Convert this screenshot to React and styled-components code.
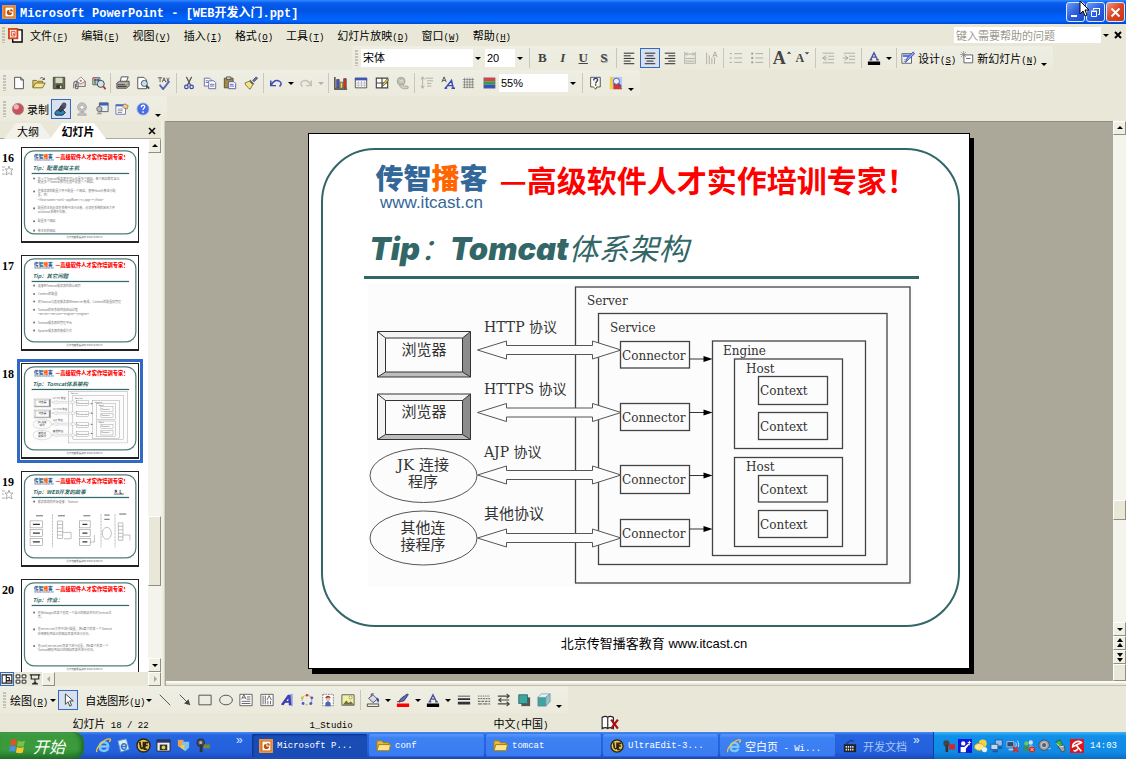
import React from "react";
import styled, { createGlobalStyle, css } from "styled-components";

const mono = '"Liberation Mono", "Noto Sans CJK SC", monospace';
const cjk = '"Noto Sans CJK SC", "Liberation Sans", sans-serif';
const teal = "#336666";
const face = "#e9e8d8";

const Global = createGlobalStyle`
  * { box-sizing: border-box; }
  html, body { margin: 0; background: ${face}; }
  body { font: 11px ${cjk}; color: #000; overflow: hidden; }
  button, input, select { font: inherit; color: inherit; margin: 0; border-radius: 0; }
  button { border: 0; background: none; padding: 0; }
  svg { display: block; flex: none; }
`;

/* ---------- icons ---------- */

const lines = (ys, x1 = 2, x2 = 14, stroke = "#333") =>
  ys.map((y) => <path key={y} d={`M${x1} ${y}H${x2}`} stroke={stroke} strokeWidth="1.2" />);

const icons = {
  ppt: (
    <g>
      <rect width="16" height="16" fill="#d9731a" />
      <rect x="1" y="1" width="14" height="14" fill="none" stroke="#f6b26b" />
      <rect x="4" y="3" width="9" height="10" fill="#fff" />
      <path d="M8.5 5.5a3 3 0 1 0 3 3h-3z" fill="#c2500c" />
      <path d="M9.5 4.5v3h3a3 3 0 0 0-3-3z" fill="#c2500c" />
    </g>
  ),
  doc: (
    <g>
      <path d="M5 2h10v13H5z" fill="#fff" stroke="#000" strokeWidth="1.5" />
      <path d="M0 0h11v12H0z" fill="#d4451d" />
      <path d="M2 2h7v8H2z" fill="#fff" />
      <path d="M3.5 3.5h4v5h-4z" fill="none" stroke="#d4451d" />
      <path d="M5.5 5v2h2" stroke="#d4451d" fill="none" />
    </g>
  ),
  new: <path d="M3 1.5h7l3 3v10H3zM10 1.5v3h3" fill="#fff" stroke="#444" />,
  open: (
    <g>
      <path d="M1 13V5h4l1 1h6v3" fill="#e9cf6b" stroke="#6f6420" />
      <path d="M1 13.5L4 8h11l-3 5.5z" fill="#f7e58f" stroke="#6f6420" />
      <path d="M9 3c2-2 4-1 5 1m0-2v2h-2" fill="none" stroke="#444" />
    </g>
  ),
  save: (
    <g>
      <path d="M1.5 1.5h13v13h-13z" fill="#6b7050" stroke="#3c4030" />
      <path d="M4 2h8v6H4z" fill="#d8d8c8" />
      <path d="M5 10h7v4H5z" fill="#33362a" />
      <path d="M9 11h2v3H9z" fill="#ddd" />
    </g>
  ),
  mail: (
    <g>
      <path d="M5 6l5-5 5 5v6H5z" fill="#fff" stroke="#777" />
      <path d="M5 6l5 3 5-3v6H5z" fill="#f3dcd0" stroke="#777" />
      <path d="M2 14V9c0-4 5-4 5 0v4c0 2-3 2-3 0V9" fill="none" stroke="#667" strokeWidth="1.2" />
      <circle cx="10" cy="5.500" r="1.300" fill="#c66" />
    </g>
  ),
  find: (
    <g>
      <path d="M1 2h8v8H1z" fill="#fff" stroke="#444" />
      <path d="M2 3h3v3H2z" fill="#c33" />
      <path d="M5 3h3v3H5z" fill="#46a" />
      <path d="M2 6h3v3H2z" fill="#3a7" />
      <circle cx="10" cy="9" r="4" fill="#cfe4ef" stroke="#333" />
      <path d="M13 12l2.5 3" stroke="#a33" strokeWidth="2" />
    </g>
  ),
  print: (
    <g>
      <path d="M5 6l1-5h8l-2 5" fill="#fff" stroke="#444" />
      <path d="M1 8l3-2h11v5l-3 3H1z" fill="#aaa" stroke="#444" />
      <path d="M2 10h10M2 12h10" stroke="#333" />
      <path d="M10 9h2" stroke="#e3c233" strokeWidth="2" />
    </g>
  ),
  preview: (
    <g>
      <path d="M2 1.5h7l3 3v10H2z" fill="#fff" stroke="#444" />
      <circle cx="9.5" cy="8.5" r="3.5" fill="#bfe3e6" stroke="#446" />
      <path d="M12 11l3 3.500" stroke="#445" strokeWidth="2" />
    </g>
  ),
  spell: (
    <g>
      <path d="M1 2h5M3.500 2v5M6 7l2-5 2 5M7 5h2M11 2l3 5M14 2l-3 5" fill="none" stroke="#555" />
      <path d="M3 10l4 5 7-9" fill="none" stroke="#5566b8" strokeWidth="2.200" />
    </g>
  ),
  cut: (
    <g fill="none">
      <path d="M5 1l5 10M11 1L6 11" stroke="#555" strokeWidth="1.300" />
      <circle cx="5" cy="12.500" r="2" stroke="#3a49b0" strokeWidth="1.400" />
      <circle cx="11" cy="12.500" r="2" stroke="#3a49b0" strokeWidth="1.400" />
    </g>
  ),
  copy: (
    <g fill="#fff" stroke="#5a62a0">
      <path d="M1.500 2.500h6l2 2v7h-8z" />
      <path d="M6.500 5.500h6l2 2v7h-8z" />
      <path d="M8 9.500h5M8 11.500h5M3 5.500h3M3 7.500h3" />
    </g>
  ),
  paste: (
    <g>
      <path d="M1.500 2.500h10v11h-10z" fill="#a08a4a" stroke="#5b4d20" />
      <path d="M4 1h5v3H4z" fill="#ccc" stroke="#555" />
      <path d="M6.500 6.500h6l2 2v6h-8z" fill="#fff" stroke="#4a52a0" />
      <path d="M8 9.500h4M8 11.500h5" stroke="#4a52a0" />
    </g>
  ),
  brush: (
    <g>
      <path d="M10 5l4-4 1.500 1.500-4 4z" fill="#6b78c8" stroke="#445" />
      <path d="M7 4l5 5-2 1-4-4z" fill="#666" />
      <path d="M1 8l5-2 4 4-3 5c-2-1-5-4-6-7z" fill="#f2e58a" stroke="#77703a" />
    </g>
  ),
  undo: <path d="M2 5v6h6M2.500 10.500C5 5 9 4 12 6s2 4 0 6" fill="none" stroke="#3b4bb5" strokeWidth="1.700" />,
  redo: <path d="M14 5v6H8M13.500 10.500C11 5 7 4 4 6s-2 4 0 6" fill="none" stroke="#c2c1b2" strokeWidth="1.700" />,
  chart: (
    <g stroke="#333" strokeWidth=".7">
      <path d="M1 1v14h14" fill="none" strokeWidth="1.500" />
      <path d="M3 4h3v10H3z" fill="#4458d0" />
      <path d="M7 7h3v7H7z" fill="#f2d43a" />
      <path d="M11 3h3v11h-3z" fill="#d3382c" />
    </g>
  ),
  table: (
    <g>
      <path d="M1.500 2.500h13v11h-13z" fill="#fff" stroke="#444" />
      <path d="M1 2h14v3H1z" fill="#4156b5" />
      <path d="M5 5v8M8.500 5v8M12 5v8M2 8h12M2 10.500h12" stroke="#bbb" />
    </g>
  ),
  borders: (
    <g>
      <path d="M1.500 2.500h13v11h-13zM8 2.500v11M1.500 8h13" fill="#fff" stroke="#444" strokeWidth="1.300" />
      <path d="M8 12l1-3 5-6 1.500 1.500-5 6z" fill="#f0d040" stroke="#444" strokeWidth=".8" />
    </g>
  ),
  link: (
    <g fill="#d0cfc2" stroke="#a5a498">
      <circle cx="7" cy="6" r="4.500" fill="#bdbcaf" />
      <path d="M4 4c2 2 4 1 6 3M5 8c2-1 3-1 4-4" fill="none" stroke="#e5e4d8" />
      <path d="M5 11c3-2 4-1 5 0s3 0 5 1v2c-3 1-8 1-10-3z" />
    </g>
  ),
  expand: (
    <g stroke="#aaa99c" fill="none">
      <path d="M3 1v13M1 4l2-3 2 3M1 11l2 3 2-3M6 2.500h9M8 5.500h7M8 8.500h5M8 11.500h5" />
    </g>
  ),
  fontAA: (
    <g fill="none">
      <path d="M1 7l2.500-6L6 7M2 5h3" stroke="#444" />
      <path d="M5 14l7-9 2 9M8 11h5.500M4 14h3M12 14h4" stroke="#3b4bb5" strokeWidth="1.700" />
    </g>
  ),
  grid: <path d="M4 2v12M7 2v12M10 2v12M13 2v12M2 4h13M2 7h13M2 10h13M2 13h13" stroke="#777" strokeWidth=".8" />,
  color: (
    <g>
      <path d="M2 2h13v4H2z" fill="#d8404a" />
      <path d="M2 6h13v4H2z" fill="#3a9a4a" />
      <path d="M2 10h13v4H2z" fill="#3a4cc4" />
      <path d="M2 2h13v12H2z" fill="none" stroke="#777" strokeWidth=".6" />
    </g>
  ),
  help: (
    <g>
      <path d="M3 1.500h11v11H10l-1 2.500-3-2.500H3z" fill="#fffde0" stroke="#444" />
      <path d="M6.500 5c0-3 4.500-3 4.500-.5C11 6.500 8.700 6 8.700 8.500M8.700 9.500v1.500" fill="none" stroke="#26389c" strokeWidth="1.600" />
    </g>
  ),
  research: (
    <g>
      <path d="M1 1h14v14H1z" fill="#b9c8ee" />
      <path d="M1 1h3v14H1z" fill="#f2d43a" />
      <path d="M5 8l5-3 5 10H5z" fill="#d3382c" />
      <circle cx="8.500" cy="6" r="3.500" fill="#e8f0ff" stroke="#4057b0" />
      <path d="M11 9l3 3" stroke="#4057b0" strokeWidth="2" />
    </g>
  ),
  alignL: <g>{lines([2.5, 8.5, 14.5])}{lines([5.5, 11.5], 2, 10)}</g>,
  alignC: <g>{lines([2.5, 8.5, 14.5])}{lines([5.5, 11.5], 4, 12)}</g>,
  alignR: <g>{lines([2.5, 8.5, 14.5])}{lines([5.5, 11.5], 6, 14)}</g>,
  distrib: (
    <g stroke="#a9a89b" fill="none">
      <path d="M2 1v14M14 1v14M3 3.500h10M5 2L3 3.500 5 5M11 2l2 1.500L11 5M3 8.500h10M3 11.500h10M3 14h10" />
    </g>
  ),
  vtext: <path d="M3 2v13M6 5v10M9 8v7M12 7v8M10 7l2.500-6L15 7M11 5h3" stroke="#a9a89b" fill="none" />,
  numlist: <g>{lines([3, 8, 13], 6, 15, "#b5b4a7")}{lines([3, 8, 13], 1, 3, "#a0a094")}</g>,
  bullist: (
    <g fill="#a0a094">
      {lines([3, 8, 13], 6, 15, "#b5b4a7")}
      <circle cx="2.500" cy="3" r="1.300" />
      <circle cx="2.500" cy="8" r="1.300" />
      <circle cx="2.500" cy="13" r="1.300" />
    </g>
  ),
  outdent: (
    <g>
      {lines([2.5, 13.5], 2, 15, "#b5b4a7")}
      {lines([6, 9.5], 8, 15, "#b5b4a7")}
      <path d="M6 5L2 8l4 3M2 8h5" fill="none" stroke="#a0a094" />
    </g>
  ),
  indent: (
    <g>
      {lines([2.5, 13.5], 2, 15, "#b5b4a7")}
      {lines([6, 9.5], 8, 15, "#b5b4a7")}
      <path d="M3 5l4 3-4 3M1 8h6" fill="none" stroke="#a0a094" />
    </g>
  ),
  design: (
    <g>
      <path d="M1 3h11v11H1z" fill="#fff" stroke="#555" />
      <path d="M2 4h9v3H2z" fill="#5b7be0" />
      <path d="M5 13l2-5 7-7 1.500 2-7 7z" fill="#8ea4f0" stroke="#3a49b0" />
      <path d="M3 10h3M3 12h2" stroke="#888" />
    </g>
  ),
  newslide: (
    <g>
      <path d="M4.500 4.500h10v9h-10z" fill="#fff" stroke="#555" />
      <path d="M7 8.500h5" stroke="#555" />
      <path d="M4 0v8M0 4h8M1 1l6 6M7 1L1 7" stroke="#888" strokeWidth=".8" />
    </g>
  ),
  ball: (
    <g>
      <circle cx="8" cy="8" r="6.500" fill="#c6525a" stroke="#a89090" />
      <circle cx="6" cy="5.500" r="3" fill="#f0b5b8" />
    </g>
  ),
  mic: (
    <g>
      <path d="M1 13c1-4 5-5 9-4l3 3-3 3H2z" fill="#2f86b5" stroke="#123" />
      <path d="M7 11L5 9l4-6 4 3-4 4z" fill="#445" stroke="#123" />
      <circle cx="11.500" cy="3.500" r="2.800" fill="#556" />
    </g>
  ),
  webcam: (
    <g fill="#c5c5c5" stroke="#a5a5a5">
      <circle cx="8" cy="6" r="5" />
      <circle cx="8" cy="6" r="2.500" fill="#f4f4f4" />
      <path d="M3 15c1-4 9-4 10 0z" />
    </g>
  ),
  screencam: (
    <g>
      <path d="M5 1h10v10H5z" fill="#e6ecf8" stroke="#555" />
      <path d="M5 1h10v3H5z" fill="#3a62b5" />
      <circle cx="5" cy="8" r="3" fill="#bbb" stroke="#666" />
      <path d="M2 14c1-3 5-3 6 0z" fill="#999" />
    </g>
  ),
  props: (
    <g>
      <path d="M1 3h11v11H1z" fill="#fff" stroke="#5a76b8" />
      <path d="M1 3h11v2H1z" fill="#4a6cc0" />
      <path d="M3 8h6M3 10h6M3 12h5" stroke="#888" />
      <path d="M8 5l3-3 4 2-1 4-4-1z" fill="#e8c79a" stroke="#86603a" strokeWidth=".7" />
    </g>
  ),
  qball: (
    <g>
      <circle cx="8" cy="8" r="6.800" fill="#4a6fe0" stroke="#8ea3e8" />
      <path d="M6 6c0-3 4-3 4-.5C10 7.200 8 7 8 9M8 10.500v2" stroke="#fff" strokeWidth="1.500" fill="none" />
    </g>
  ),
  normal: <path d="M1.500 2.500h13v11h-13zM7 2.500v11M7 6h4v4H7M7 10.500h7.500" fill="#fff" stroke="#222" strokeWidth="1.500" />,
  sorter: <path d="M1.500 2.500h5v4h-5zM9.500 2.500h5v4h-5zM1.500 9.500h5v4h-5zM9.500 9.500h5v4h-5z" fill="#fff" stroke="#222" strokeWidth="1.300" />,
  show: <path d="M1 2.500h14M3 3v5h10V3M8 8v5M4 14.500h8M6 13h4" fill="none" stroke="#222" strokeWidth="1.500" />,
  pointer: <path d="M5 1v12l3-3 2 5 2-1-2-5h4z" fill="#fff" stroke="#333" />,
  line: <path d="M2 2l12 12" stroke="#444" />,
  arrow: (
    <g>
      <path d="M2 2l9 9" stroke="#444" />
      <path d="M14 14l-2-7-5 5z" fill="#444" />
    </g>
  ),
  rect: <path d="M1 2.500h14v11H1z" fill="none" stroke="#444" />,
  oval: <ellipse cx="8" cy="8" rx="7.300" ry="5.500" fill="none" stroke="#444" />,
  textbox: (
    <g fill="none" stroke="#555">
      <path d="M1 1.500h14v13H1z" fill="#fff" />
      <path d="M3 7l2.500-5L8 7M4 5.500h3M9 4.500h4M9 7h4M3 9.500h10M3 12h10" />
    </g>
  ),
  vtextbox: (
    <g fill="none" stroke="#555">
      <path d="M1 1.500h14v13H1z" fill="#fff" />
      <path d="M8 8l2.500-5L13 8M3.500 3v10M6 3v10M9 9v4M12 9v4" />
    </g>
  ),
  wordart: (
    <g>
      <path d="M12 1l2.500 0 0 14H12z" fill="#9aa2dc" />
      <path d="M1 13l8-11h3l1 12h-3v-3H6l-2 3z" fill="#3a3fb4" />
      <path d="M7.500 9l2-3v3z" fill="#fff" />
    </g>
  ),
  diagram: (
    <g fill="none">
      <circle cx="8" cy="8" r="5.500" stroke="#888" strokeDasharray="2 2" />
      <circle cx="8" cy="2.500" r="1.500" fill="#d3382c" />
      <circle cx="13.500" cy="5.500" r="1.600" fill="#4a57c4" />
      <circle cx="12.500" cy="12" r="1.600" fill="#4a57c4" />
      <circle cx="3.500" cy="12" r="1.600" fill="#4a57c4" />
      <circle cx="2.500" cy="5.500" r="1.600" fill="#e0bb2e" />
    </g>
  ),
  clipart: (
    <g>
      <path d="M2 1.500h12v13H2z" fill="#fff" stroke="#777" strokeDasharray="2 1" />
      <path d="M5 15v-4l3-2 3 2v4z" fill="#4b64b8" />
      <circle cx="8" cy="6.500" r="2.800" fill="#e8c0a5" />
      <path d="M5 6c0-4 6-4 6 0l-2-1z" fill="#a5322c" />
    </g>
  ),
  picture: (
    <g>
      <path d="M1 2h14v12H1z" fill="#f3efa2" stroke="#555" />
      <path d="M2 13.500l4-5 3 3 2-2 4 4z" fill="#6c7044" />
      <circle cx="11" cy="5" r="1.700" fill="#fff" stroke="#99954a" />
    </g>
  ),
  fill: (
    <g>
      <path d="M3 6l5-4 5 5-5 4z" fill="#d6d9f0" stroke="#445" />
      <path d="M12 5c4 1 3 4 2 6-1-1-2-3-2-6z" fill="#3a49b0" />
      <path d="M6 4V1h3" stroke="#445" fill="none" />
      <path d="M1.500 12.500h13v3h-13z" fill={face} stroke="#444" />
    </g>
  ),
  pen: (
    <g>
      <path d="M3 10l3-4 7-5 1 1-5 7z" fill="#5c69c8" stroke="#334" />
      <path d="M1 10c2-1 2 1 4 0" stroke="#444" fill="none" />
      <path d="M1 12h14v4H1z" fill="red" />
    </g>
  ),
  fontColor: (
    <g>
      <path d="M4 10l4-8 4 8M5.500 7h5M3 10h3M10.500 10h3" fill="none" stroke="#4a539c" strokeWidth="1.600" />
      <path d="M1 12h14v4H1z" />
    </g>
  ),
  weight: (
    <g fill="#333">
      <path d="M1 3h14v1H1zM1 6h14v2H1zM1 10h14v3H1z" />
    </g>
  ),
  dash: (
    <g stroke="#444">
      <path d="M1 3.500h14" strokeDasharray="1 1" />
      <path d="M1 6.500h14" strokeDasharray="2 1" />
      <path d="M1 9.500h14" strokeDasharray="3 1" />
      <path d="M1 12.500h14" strokeDasharray="5 1" />
    </g>
  ),
  arrows: <path d="M1 3.500h13M11 1l3 2.500L11 6M14 8H2M5 5.500L2 8l3 2.500M1 12.500h13M11 10l3 2.500-3 2.500" fill="none" stroke="#444" strokeWidth="1.300" />,
  shadow: (
    <g>
      <path d="M5 5h10v10H5z" fill="#555" />
      <path d="M2 2h10v10H2z" fill="#3fa39e" stroke="#2a6e6b" />
    </g>
  ),
  cube: (
    <g stroke="#579" strokeWidth=".6">
      <path d="M1 5h9v10H1z" fill="#3fa39e" />
      <path d="M1 5l4-4h10l-5 4z" fill="#e4f4f4" />
      <path d="M10 5l5-4v9l-5 5z" fill="#8cc9c6" />
    </g>
  ),
  spellbook: (
    <g>
      <path d="M1 3c2-1 4-1 5 0 1-1 3-1 5 0v10c-2-1-4-1-5 0-1-1-3-1-5 0zM6 3v10" fill="#fff" stroke="#222" />
      <path d="M9 5l6 8M15 5l-6 8" stroke="#a5121a" strokeWidth="2" />
    </g>
  ),
  windows: (
    <g>
      <path d="M2 3c2-1.500 4-1 5.500 0L6.500 8C5 7 3 7 1 8z" fill="#e8502a" />
      <path d="M8.500 3.500c2 1 4 1 6.500 0l-1 5c-2 1-4 1-6.500 0z" fill="#7cc142" />
      <path d="M1 9c2-1 4-1 5.500 0l-1 5c-2-1-4-1-5.500 0z" fill="#4a90e8" />
      <path d="M7.500 9.500c2 1 4 1 6.500 0l-1 5c-2 1-4 1-6.500 0z" fill="#f8c52c" />
    </g>
  ),
  ie: (
    <g fill="none">
      <path d="M4 9h9c0-6-9-6-9 0s7 6 9 2" stroke="#7cc8f8" strokeWidth="2.600" />
      <path d="M1 15C-1 11 9 0 15 1c1 1 0 2-1 3" stroke="#f2c53a" strokeWidth="1.400" />
    </g>
  ),
  oe: (
    <g>
      <path d="M2 3l9-2 3 11-9 3z" fill="#dcebfa" stroke="#5f93cc" />
      <path d="M5 9h6c0-4-5-4-5 0s4 4 5 1" fill="none" stroke="#3277c8" strokeWidth="1.600" />
    </g>
  ),
  ultra: (
    <g>
      <circle cx="8" cy="8" r="7" fill="#e8c34c" stroke="#2b2310" strokeWidth="1.500" />
      <path d="M4 4l1 6c1 2 3 1 3-1V4M13 5l-3 0-1 7h3M9.500 8h3" fill="none" stroke="#2b2310" strokeWidth="1.800" />
    </g>
  ),
  photo: (
    <g>
      <path d="M1 2h14v12H1z" fill="#eee" stroke="#222" />
      <path d="M1 2h14v3H1z" fill="#26356c" />
      <path d="M4 7h8v6H4z" fill="#333" />
      <circle cx="8" cy="10" r="2" fill="#d8d34a" />
    </g>
  ),
  msn: (
    <g>
      <path d="M2 2h6v7H2z" fill="#f0a04a" />
      <path d="M7 4h7v6l-4 4-5-4z" fill="#7fc1e8" />
      <path d="M3 9l6-2v6z" fill="#e8d04a" />
    </g>
  ),
  plug: (
    <g>
      <circle cx="5" cy="5" r="4" fill="#555" stroke="#222" />
      <path d="M4 7h3v8H4z" fill="#333" />
      <path d="M8 7h7v4H8z" fill="#7a8a2f" />
      <circle cx="5" cy="5" r="1.500" fill="#bbb" />
    </g>
  ),
  folder: (
    <g>
      <path d="M1 13V3h5l2 2h6v8z" fill="#e7b93c" stroke="#a37a16" />
      <path d="M1 13.500L3 7h12.500L14 13.500z" fill="#fbe489" stroke="#a37a16" />
    </g>
  ),
  keyboard: (
    <g>
      <path d="M1 6h14v9H1z" fill="#222" />
      <path d="M3 9h10M3 12h10" stroke="#eee" strokeWidth="2" strokeDasharray="1.500 1" />
      <path d="M4 6c0-4 2 0 3-3s3 0 5-1" fill="none" stroke="#222" />
    </g>
  ),
  redplug: (
    <g>
      <circle cx="5" cy="5" r="3.500" fill="#444" />
      <path d="M4 7h3v8H4z" fill="#333" />
      <path d="M8 6h7v6H8z" fill="#d8242a" />
    </g>
  ),
  person: (
    <g>
      <path d="M0 0h16v16H0z" fill="#0d18d6" />
      <circle cx="6" cy="5" r="2.500" fill="#fff" />
      <path d="M3 15V9h4l5-4 1 1-4 5v4z" fill="#fff" />
      <path d="M13 2v5M11 4h4" stroke="#fff" />
    </g>
  ),
  bubble: (
    <g>
      <circle cx="10" cy="5" r="4.500" fill="#f5d23c" />
      <ellipse cx="6" cy="9" rx="5.500" ry="4" fill="#ffe98a" stroke="#cfa21f" />
      <circle cx="12" cy="12" r="3" fill="#e9edf5" />
    </g>
  ),
  net: (
    <g stroke="#2a4f8e">
      <path d="M6 1h8v7H6z" fill="#8ec5f5" />
      <path d="M1 6h8v6H1z" fill="#b9dcf8" />
      <path d="M3 14h6M10 10h4" strokeWidth="2" />
    </g>
  ),
  wireless: (
    <g fill="none">
      <path d="M1 3h8v6H1z" fill="#33466e" stroke="#bcd" />
      <path d="M3 12h5" stroke="#bcd" strokeWidth="2" />
      <path d="M11 4c1 1 1 4 0 5M13 2c2 2 2 7 0 9" stroke="#e6edf8" />
      <path d="M8 9l6 6M14 9l-6 6" stroke="#e02820" strokeWidth="2" />
    </g>
  ),
  people: (
    <g>
      <circle cx="5" cy="5" r="2.500" fill="#6fc35a" />
      <path d="M1 13c0-7 8-7 8 0z" fill="#3d8f48" />
      <circle cx="10" cy="4" r="2.500" fill="#cfe0ee" />
      <path d="M8 8c3-2 6 0 6 3H9z" fill="#8fb8dc" />
      <circle cx="11.500" cy="12" r="3.500" fill="#d8281e" />
      <path d="M10 10.500l3 3M13 10.500l-3 3" stroke="#fff" />
    </g>
  ),
  speaker: (
    <g>
      <circle cx="7" cy="7" r="6" fill="#9aa1a8" stroke="#454b52" />
      <circle cx="7" cy="7" r="3" fill="#5a6068" stroke="#dde" />
      <path d="M12 11c1 1 2 0 2-1" stroke="#eee" fill="none" />
    </g>
  ),
  usb: (
    <g>
      <path d="M2 3l5-2 3 6-4 3z" fill="#43b24b" stroke="#1e6a2a" />
      <path d="M5 9l6-2 2 6-4 2z" fill="#9aa1a8" stroke="#444" />
      <path d="M3 5l4 4 4-1" stroke="#fff" fill="none" />
    </g>
  ),
  avira: (
    <g>
      <path d="M0 0h16v16H0z" fill="#e2141c" />
      <path d="M3 9C3 4 9 1 13 4c-3 2-7 3-10 5zM7 7l6 7M4 13c2 1 4 0 5-2" fill="none" stroke="#fff" strokeWidth="1.800" />
    </g>
  ),
};

const Icon = ({ name, size = 14 }) => (
  <svg width={size} height={size} viewBox="0 0 16 16" aria-hidden="true">
    {icons[name]}
  </svg>
);

const Triangle = ({ dir = "down", color = "#000" }) => {
  const d = { down: "M1 3h6L4 6z", up: "M1 5h6L4 2z", left: "M5 1v6L2 4z", right: "M3 1v6l3-3z" }[dir];
  return (
    <svg width="8" height="8" viewBox="0 0 8 8" aria-hidden="true">
      <path d={d} fill={color} />
    </svg>
  );
};

/* ---------- window chrome ---------- */

const Page = styled.div`
  height: 100vh;
  display: flex;
  flex-direction: column;
  background: ${face};
`;

const TitleBar = styled.header`
  height: 24px;
  flex: none;
  position: relative;
  display: flex;
  align-items: center;
  gap: 4px;
  padding: 0 1px 0 2px;
  color: #fff;
  background: linear-gradient(#2f8bff 0, #0a5cf0 3px, #0053e1 10px, #0062fb 18px, #0066ff 21px, #0043c8 24px);
`;

const WindowTitle = styled.h1`
  flex: 1;
  margin: 0;
  font: bold 12px ${mono};
  white-space: pre;
`;

const WindowButton = styled.button`
  width: 19px;
  height: 20px;
  display: grid;
  place-items: center;
  border: 1px solid #dfe9fb;
  border-radius: 3px;
  margin-left: -3px;
  background: ${(p) => (p.$close ? "linear-gradient(135deg,#f0937a,#dc4322 50%,#c4371a)" : "linear-gradient(135deg,#6f9cf5,#2a5fe0 50%,#1c4bcb)")};
`;

const Cursor = styled.svg`
  position: absolute;
  right: 36px;
  top: 0;
`;

const MenuBar = styled.nav`
  height: 22px;
  flex: none;
  display: flex;
  align-items: center;
  padding: 0 2px;
`;

const MenuButton = styled.button`
  padding: 0 6px 0 7px;
  white-space: nowrap;
`;

const Latin = styled.span`
  font: 9px ${mono};
`;

const Hot = ({ k }) => (
  <Latin>
    (<u>{k}</u>)
  </Latin>
);

const Spring = styled.div`
  flex: 1;
`;

const AskBox = styled.input`
  width: 147px;
  height: 16px;
  border: 0;
  padding: 0 2px;
  background: #fff;
  &::placeholder { color: #9a998c; opacity: 1; }
`;

const Grip = styled.i`
  width: 3px;
  height: 16px;
  flex: none;
  margin-right: 3px;
  background: repeating-linear-gradient(#c3c2b2 0 2px, transparent 2px 3px);
`;

const ToolRow = styled.div`
  height: ${(p) => p.$h}px;
  flex: none;
  display: flex;
  padding-left: ${(p) => p.$left || 0}px;
`;

const ToolStrip = styled.div`
  display: flex;
  align-items: center;
  padding: 0 4px 0 3px;
  height: 100%;
  background: linear-gradient(#efeee4, #ebeadc);
  border-radius: 0 3px 3px 0;
`;

const Group = styled.div`
  width: ${(p) => p.$w}px;
  display: flex;
  align-items: center;
  justify-content: space-around;
`;

const Divider = styled.i`
  width: 1px;
  height: 20px;
  flex: none;
  margin: 0 2px;
  background: #c8c7b8;
`;

const ToolButton = styled.button`
  width: 20px;
  height: 20px;
  flex: none;
  display: grid;
  place-items: center;
  ${(p) => p.$on && css`
    border: 1px solid #316ac5;
    background: #d9e1ee;
  `}
`;

const DropArrow = styled.button`
  width: 10px;
  height: 20px;
  flex: none;
  display: grid;
  place-items: center;
  align-items: ${(p) => (p.$low ? "end" : "center")};
`;

const TextButton = styled.button`
  display: flex;
  align-items: center;
  gap: ${(p) => p.$gap ?? 3}px;
  height: 20px;
  padding: 0 ${(p) => (p.$tight ? 1 : 2)}px;
  padding-left: ${(p) => (p.$wide ? 7 : p.$tight ? 1 : 2)}px;
  white-space: nowrap;
`;

const Letter = styled.span`
  font: bold 13px "Liberation Serif", serif;
  color: #444;
  font-style: ${(p) => (p.$italic ? "italic" : "normal")};
  text-decoration: ${(p) => (p.$under ? "underline" : "none")};
  text-shadow: ${(p) => (p.$shadow ? "1px 1px 0 #999" : "none")};
`;

const GrowLetter = styled.span`
  width: 20px;
  display: flex;
  align-items: flex-start;
  justify-content: center;
  font: bold ${(p) => p.$size}px/16px "Liberation Serif", serif;
  color: #444;
  svg { width: 6px; height: 6px; }
`;

const ComboBox = styled.div`
  display: flex;
  align-items: center;
  margin-right: 2px;
`;

const ComboSelect = styled.select`
  appearance: none;
  width: ${(p) => p.$w}px;
  height: 18px;
  border: 0;
  padding: 0 2px;
  background: #fff;
  font: 11px "Liberation Sans", "Noto Sans CJK SC", sans-serif;
`;

const Combo = ({ w, label, value }) => (
  <ComboBox>
    <ComboSelect $w={w} aria-label={label} defaultValue={value}>
      <option>{value}</option>
    </ComboSelect>
    <DropArrow aria-label={label + "列表"}>
      <Triangle />
    </DropArrow>
  </ComboBox>
);

const Tools = ({ w, names, on }) => (
  <Group $w={w}>
    {names.map((n) => (
      <ToolButton key={n} $on={n === on} aria-label={n}>
        <Icon name={n} />
      </ToolButton>
    ))}
  </Group>
);

/* ---------- slide pane ---------- */

const Body = styled.main`
  flex: 1;
  min-height: 0;
  display: flex;
`;

const SidePane = styled.aside`
  width: 161px;
  flex: none;
  display: flex;
  flex-direction: column;
`;

const Tabs = styled.div`
  height: 18px;
  flex: none;
  display: flex;
  padding: 2px 5px 0 4px;
  background: linear-gradient(transparent 17px, #aaa99a 17px);
`;

const Tab = styled.button`
  width: ${(p) => p.$w}px;
  height: 16px;
  margin-right: -2px;
  font-size: 11px;
  font-weight: ${(p) => (p.$on ? 700 : 400)};
  background: ${(p) => (p.$on ? "#fff" : "#f3f2ea")};
  clip-path: polygon(12px 0, calc(100% - 12px) 0, 100% 100%, 0 100%);
`;

const PlainButton = styled.button`
  line-height: 14px;
`;

const ListArea = styled.div`
  flex: 1;
  min-height: 0;
  display: flex;
  overflow: hidden;
`;

const ThumbList = styled.ol`
  flex: 1;
  margin: 0;
  padding: 8px 0 0;
  list-style: none;
  background: #fff;
  display: flex;
  flex-direction: column;
  gap: 12px;
  overflow: hidden;
`;

const ThumbItem = styled.li`
  display: grid;
  grid-template-columns: 21px 118px;
  flex: none;
`;

const ThumbNumber = styled.div`
  padding: 4px 0 0 2px;
  font: bold 12px/14px "Liberation Serif", serif;
`;

const ThumbFrame = styled.div`
  height: 96px;
  border: 1px solid #222;
  border-bottom-width: 2px;
  background: #fff;
  outline: ${(p) => (p.$on ? "3px solid #316ac5" : "0")};
  outline-offset: 1px;
`;

const ViewBar = styled.div`
  height: 14px;
  flex: none;
  display: flex;
  align-items: center;
`;

const ViewButton = styled.button`
  width: 14px;
  height: 14px;
  display: grid;
  place-items: center;
  border: ${(p) => (p.$on ? "1px solid #316ac5" : "0")};
`;

const ScrollColumn = styled.div`
  width: 13px;
  flex: none;
  display: flex;
  flex-direction: column;
  background: #f4f3ec;
`;

const ScrollButton = styled.button`
  width: 13px;
  height: 14px;
  flex: none;
  display: grid;
  place-items: center;
  background: #f0efe3;
  border: 1px solid #fff;
  border-right-color: #8f8e80;
  border-bottom-color: #8f8e80;
`;

const ScrollSpace = styled.div`
  flex: ${(p) => p.$part};
`;

const ScrollThumb = styled.div`
  height: ${(p) => p.$h}px;
  background: ${face};
  border: 1px solid #fff;
  border-right-color: #8f8e80;
  border-bottom-color: #8f8e80;
`;

const Splitter = styled.div`
  width: 5px;
  background: linear-gradient(90deg, #f4f3ea, ${face} 60%, #8f8d80);
`;

/* ---------- work area ---------- */

const Workspace = styled.section`
  flex: 1;
  min-width: 0;
  display: flex;
`;

const WorkColumn = styled.div`
  flex: 1;
  min-width: 0;
  display: flex;
  flex-direction: column;
`;

const WorkEdge = styled.div`
  height: 5px;
  background: linear-gradient(#fbfaf5 2px, ${face} 2px 4px, #bdbcae 4px);
`;

const Canvas = styled.div`
  flex: 1;
  min-width: 0;
  display: flex;
  justify-content: center;
  align-items: flex-start;
  padding: 11px 2px 0 0;
  background: #aba899;
  border-top: 1px solid #8f8d80;
`;

const Slide = styled.article`
  width: 662px;
  height: 536px;
  background: #fff;
  border: 1px solid #000;
  box-shadow: 4px 5px 0 #000;
  padding: 14px 9px 0 12px;
`;

const SlideFrame = styled.div`
  height: 479px;
  border: 2px solid ${teal};
  border-radius: 54px;
  padding: 14px 0 0 41px;
`;

const SlideHeader = styled.div`
  display: flex;
  align-items: flex-start;
  gap: 12px;
  padding-left: 12px;
`;

const Logo = styled.div`
  width: 112px;
  color: #336699;
  text-align: center;
  white-space: nowrap;
`;

const LogoName = styled.div`
  font: 900 28px/26px ${cjk};
  em { font-style: normal; color: #ff6600; }
`;

const LogoUrl = styled.div`
  margin-top: 4px;
  font: 17px/18px "Liberation Sans", sans-serif;
`;

const Slogan = styled.div`
  font: bold 30px/30px ${cjk};
  color: #f00;
  white-space: nowrap;
`;

const SlideTitle = styled.h2`
  margin: 19px 0 0 6px;
  font: italic 900 31px/36px Inter, "Noto Sans CJK SC", sans-serif;
  color: ${teal};
  white-space: nowrap;
  span { font-weight: 400; font-size: 30px; line-height: 30px; }
`;

const TitleRule = styled.hr`
  width: 555px;
  height: 3px;
  margin: 9px 0 5px;
  border: 0;
  background: ${teal};
`;

const DiagramBox = styled.div`
  padding-left: 4px;
`;

const SlideFooter = styled.footer`
  margin-top: 8px;
  padding-left: 28px;
  text-align: center;
  font: 13px/18px "Liberation Sans", "Noto Sans CJK SC", sans-serif;
`;

const Bevel = ({ y }) => (
  <g>
    <path d={`M377.500 ${y}h93v45.500h-93z`} fill="#f4f4f4" />
    <path d={`M470.500 ${y}v45.500l-8-5v-34z`} fill="#8c8c8c" />
    <path d={`M377.500 ${y + 45.5}h93l-8-5h-77z`} fill="#bdbdbd" />
    <path d={`M385.500 ${y + 6.5}h77v34h-77z`} fill="#fcfcfc" />
    <path
      d={`M377.500 ${y}h93v45.500h-93zM385.500 ${y + 6.5}h77v34h-77zM377.500 ${y}l8 6.500M470.500 ${y}l-8 6.500M377.500 ${y + 45.5}l8-5M470.500 ${y + 45.5}l-8-5`}
      fill="none"
      stroke="#333"
    />
    <text x="424" y={y + 23} fontSize="15" textAnchor="middle">浏览器</text>
  </g>
);

const Box = ({ x1, y1, x2, y2 }) => (
  <rect x={x1} y={y1} width={x2 - x1} height={y2 - y1} fill="none" stroke="#444" strokeWidth="1.300" />
);

const Diagram = (props) => (
  <svg viewBox="368 284 545 302" width="545" height="302" fontFamily='"DejaVu Serif", "Noto Sans CJK SC", serif' fontSize="12" fill="#333" {...props}>
    <rect x="368" y="284" width="545" height="302" fill="#fcfcfc" />
    <Bevel y={331.5} />
    <Bevel y={394} />
    <ellipse cx="423.500" cy="475.500" rx="53.500" ry="27" fill="none" stroke="#555" />
    <ellipse cx="423.500" cy="538" rx="53.500" ry="27" fill="none" stroke="#555" />
    <g fontSize="15" textAnchor="middle">
      <text x="423" y="470">JK 连接</text>
      <text x="423" y="487">程序</text>
      <text x="423" y="533">其他连</text>
      <text x="423" y="550">接程序</text>
    </g>
    <g fontSize="14">
      <text x="484" y="332">HTTP 协议</text>
      <text x="484" y="394">HTTPS 协议</text>
      <text x="484" y="457">AJP 协议</text>
      <text x="484" y="519" fontSize="15">其他协议</text>
    </g>
    <Box x1={575.5} y1={287} x2={910} y2={583} />
    <Box x1={598.5} y1={313.5} x2={887} y2={564.5} />
    <Box x1={712.5} y1={341} x2={865.5} y2={555.5} />
    <Box x1={734.5} y1={359} x2={842.5} y2={448.5} />
    <Box x1={734.5} y1={457.5} x2={842.5} y2={546.5} />
    {[[376.5, 404.5], [412.5, 439.5], [475.5, 502], [510.5, 537.5]].map(([a, b]) => (
      <g key={a}>
        <Box x1={758.5} y1={a} x2={827.5} y2={b} />
        <text x="760" y={a + 18}>Context</text>
      </g>
    ))}
    {[[341.5, 368, 359], [403.5, 430.5, 412.5], [465.5, 493.5, 475.5], [519.5, 546.5, 529]].map(([a, b, m]) => (
      <g key={a}>
        <Box x1={620.5} y1={a} x2={689.5} y2={b} />
        <text x="622" y={a + 18}>Connector</text>
        <path d={`M689.500 ${m}h15`} stroke="#333" />
        <path d={`M712.500 ${m}l-9-3v6z`} fill="#000" />
      </g>
    ))}
    {[350, 412.5, 475, 538].map((y) => (
      <path
        key={y}
        d={`M477.500 ${y}l29-9v4.500h86v-4.500l28.500 9l-28.500 9v-4.500h-86v4.500z`}
        fill="#fcfcfc"
        stroke="#555"
      />
    ))}
    <text x="587" y="305">Server</text>
    <text x="610" y="332">Service</text>
    <text x="723" y="355">Engine</text>
    <text x="746" y="373">Host</text>
    <text x="746" y="471">Host</text>
  </svg>
);

const bullet = (y, text, dot = true) => (
  <g key={y}>
    {dot && <circle cx="69" cy={y - 6} r="6" fill="#777" />}
    <text x="90" y={y}>{text}</text>
  </g>
);

const Story = () => (
  <g fill="none" stroke="#888" strokeWidth="3">
    <path d="M525 126h56M532 120v-18l8 14v-14M560 102v20h10" stroke="#223" strokeWidth="4" />
    {[279, 329, 379].map((y) => (
      <g key={y}>
        <rect x="46" y={y} width="70" height="40" />
        <rect x="329" y={y} width="60" height="40" />
        <path d={`M62 ${y + 20}h40M345 ${y + 20}h28`} stroke="#333" strokeWidth="6" />
      </g>
    ))}
    <path d="M174 240v190M451 240v190M531 240v190" strokeDasharray="14 4" />
    <path d="M202 280h30v100h-30zM202 300h30M202 320h30M202 340h30M202 360h30M232 345h48v36h-40M389 400h24v-40" />
    <path d="M550 290h26v100h-26zM550 310h26M550 330h26M550 350h26M550 370h26M576 360h40v30" />
    <ellipse cx="484" cy="350" rx="26" ry="34" />
    <path d="M80 250h40M205 250h40M350 250h40M470 246h30M470 270h30M555 240h40" stroke="#555" strokeWidth="5" />
  </g>
);

const slides = [
  {
    n: 16,
    title: "配置虚拟主机",
    star: true,
    art: (
      <g>
        {bullet(180, "在一个Tomcat服务器中可以设置多个网站，每个网站都有自己")}
        {bullet(201, "配置多个Tomcat即可在其中设置一个网站。", false)}
        {bullet(254, "在服务器的配置文件中配置一个网站，使用Host元素进行配")}
        {bullet(276, "置，例：", false)}
        {bullet(301, '<Host name="site1" appBase="c:\\app"></Host>', false)}
        {bullet(351, "配置的主机必须在系统中进行注册，必须在系统的域名文件")}
        {bullet(370, "windows系统中注册。", false)}
        {bullet(424, "配置多个网站")}
        {bullet(478, "单主机的网站")}
      </g>
    ),
  },
  {
    n: 17,
    title: "其它问题",
    art: (
      <g>
        {bullet(175, "连接到Tomcat服务器的默认网页")}
        {bullet(223, "Context的配置")}
        {bullet(266, "将Tomcat与其他服务器Webserver集成，Context的配置和管理")}
        {bullet(313, "Tomcat的体系结构和启动过程")}
        {bullet(339, "<server><service><engine></engine>", false)}
        {bullet(386, "Tomcat服务器的管理平台")}
        {bullet(432, "Apache服务器的集成方式")}
      </g>
    ),
  },
  { n: 18, title: "Tomcat体系架构", on: true, art: <Diagram x="60" y="152" /> },
  {
    n: 19,
    title: "WEB开发的故事",
    star: true,
    art: (
      <g>
        {bullet(175, "服务器端的资源连接：Tomcat")}
        <Story />
      </g>
    ),
  },
  {
    n: 20,
    title: "作业：",
    art: (
      <g>
        {bullet(192, "在Webapps目录下创建一个自己的网站并访问Tomcat主")}
        {bullet(218, "页。", false)}
        {bullet(288, "在server.xml文件中进行配置，把d盘下的某一个Tomcat")}
        {bullet(313, "应用映射到自己的网站目录并进行访问。", false)}
        {bullet(383, "在conf/server.xml目录下进行设置，把e盘下的某一个")}
        {bullet(408, "Tomcat映射到自己的网站目录并进行访问。", false)}
      </g>
    ),
  },
];

const Thumb = ({ slide }) => (
  <svg width="116" height="93" viewBox="0 0 662 531" fontFamily={cjk}>
    <rect x="14" y="16" width="636" height="474" rx="54" fill="#fff" stroke="#4d7c7a" strokeWidth="7" />
    <text x="68" y="56" fontSize="27" fontWeight="900" fill="#336699">
      传智<tspan fill="#f60">播</tspan>客
    </text>
    <text x="70" y="74" fontSize="17" fill="#336699">www.itcast.cn</text>
    <text x="191" y="60" fontSize="30" fontWeight="900" fill="#f00">—高级软件人才实作培训专家！</text>
    <text x="61" y="126" fontSize="31" fontStyle="italic" fontWeight="700" fill={teal}>
      Tip：{slide.title}
    </text>
    <rect x="55" y="142" width="556" height="7" fill={teal} />
    <g fontSize="17" fill="#777">{slide.art}</g>
    <text x="254" y="516" fontSize="14" fill="#666">北京传智播客教育 www.itcast.cn</text>
  </svg>
);

/* ---------- status and task bar ---------- */

const StatusBar = styled.div`
  height: 19px;
  flex: none;
  display: flex;
  align-items: center;
`;

const StatusCell = styled.div`
  width: ${(p) => p.$w}px;
  text-align: center;
  white-space: pre;
`;

const TaskBar = styled.footer`
  height: 27px;
  flex: none;
  display: flex;
  align-items: stretch;
  color: #fff;
  background: linear-gradient(#4a8df5 0, #2765e0 3px, #2460dc 20px, #1b48b8);
`;

const StartButton = styled.button`
  width: 84px;
  flex: none;
  display: flex;
  align-items: center;
  gap: 7px;
  padding-left: 9px;
  font: italic 16px ${cjk};
  color: #fff;
  border-radius: 0 10px 10px 0;
  background: linear-gradient(#5eb35e 0, #3a9a3c 4px, #3a9a3c 18px, #23702a);
  box-shadow: inset -3px 0 4px #1f6a28;
`;

const QuickLaunch = styled.div`
  width: 168px;
  flex: none;
  display: flex;
  align-items: center;
  padding-left: 9px;
`;

const More = styled.button`
  align-self: flex-start;
  margin-left: ${(p) => p.$push}px;
  padding-top: 2px;
  font: 12px/12px "Liberation Sans", sans-serif;
  color: #d8e6ff;
`;

const TaskButtons = styled.div`
  flex: 1;
  display: flex;
  gap: 2px;
  padding: 2px 0;
`;

const TaskButton = styled.button`
  flex: 1;
  min-width: 0;
  display: flex;
  align-items: center;
  gap: 4px;
  padding-left: 7px;
  white-space: pre;
  border-radius: 2px;
  background: ${(p) => (p.$on ? "#1a4cb5" : "linear-gradient(#5a98fb 0, #3c81f3 4px, #3a7cf0)")};
  box-shadow: ${(p) => (p.$on ? "inset 1px 1px 2px #0c2f80" : "inset 0 -1px 0 #2a5fcb")};
`;

const DocBar = styled.div`
  width: 98px;
  flex: none;
  display: flex;
  align-items: center;
  gap: 6px;
  padding-left: 8px;
  color: #a9c6f7;
`;

const Tray = styled.div`
  width: 193px;
  flex: none;
  display: flex;
  align-items: center;
  gap: 2px;
  padding-left: 8px;
  border-left: 1px solid #0b3f9e;
  background: linear-gradient(#3cb4f5 0, #128fe8 4px, #0f8be6 20px, #0e6cc4);
`;

const Clock = styled.time`
  margin-left: 4px;
  font: 9px ${mono};
`;

const menus = [["文件", "F"], ["编辑", "E"], ["视图", "V"], ["插入", "I"], ["格式", "O"], ["工具", "T"], ["幻灯片放映", "D"], ["窗口", "W"], ["帮助", "H"]];

export default function App() {
  return (
    <Page>
      <Global />
      <TitleBar>
        <Icon name="ppt" />
        <WindowTitle>Microsoft PowerPoint - [WEB开发入门.ppt]</WindowTitle>
        <WindowButton aria-label="最小化">
          <svg width="11" height="11"><path d="M1 8h6v2H1z" fill="#fff" /></svg>
        </WindowButton>
        <WindowButton aria-label="还原">
          <svg width="11" height="11" fill="none" stroke="#fff"><path d="M3.500 3V1.500h6v6H8M3 1.500h7" /><path d="M1.500 4.500h5v5h-5zM1 4h6" /></svg>
        </WindowButton>
        <WindowButton $close aria-label="关闭">
          <svg width="11" height="11"><path d="M1.500 1.500l8 8M9.500 1.500l-8 8" stroke="#fff" strokeWidth="2" /></svg>
        </WindowButton>
        <Cursor width="12" height="18" viewBox="0 0 12 18">
          <path d="M2 1v13l3-3 2 5 2-1-2-5h4z" fill="#fff" stroke="#000" />
        </Cursor>
      </TitleBar>

      <MenuBar>
        <Grip />
        <Icon name="doc" size={15} />
        {menus.map(([t, k]) => (
          <MenuButton key={k}>
            {t}
            <Hot k={k} />
          </MenuButton>
        ))}
        <Spring />
        <AskBox placeholder="键入需要帮助的问题" aria-label="键入需要帮助的问题" />
        <DropArrow aria-label="帮助列表"><Triangle /></DropArrow>
        <PlainButton aria-label="关闭文档"><svg width="13" height="10"><path d="M4 2l6 6M10 2l-6 6" stroke="#000" strokeWidth="2" /></svg></PlainButton>
      </MenuBar>

      <ToolRow $h={24} $left={352}>
        <ToolStrip>
          <Grip />
          <Combo w={112} label="字体" value="宋体" />
          <Combo w={30} label="字号" value="20" />
          <Divider />
          <Group $w={82}>
            <ToolButton><Letter>B</Letter></ToolButton>
            <ToolButton><Letter $italic>I</Letter></ToolButton>
            <ToolButton><Letter $under>U</Letter></ToolButton>
            <ToolButton><Letter $shadow>S</Letter></ToolButton>
          </Group>
          <Divider />
          <Tools w={102} names={["alignL", "alignC", "alignR", "distrib", "vtext"]} on="alignC" />
          <Divider />
          <Tools w={41} names={["numlist", "bullist"]} />
          <Divider />
          <Group $w={41}>
            <ToolButton><GrowLetter $size={18}>A<Triangle dir="up" color="#444" /></GrowLetter></ToolButton>
            <ToolButton><GrowLetter $size={12}>A<Triangle color="#444" /></GrowLetter></ToolButton>
          </Group>
          <Divider />
          <Tools w={41} names={["outdent", "indent"]} />
          <Divider />
          <Tools w={20} names={["fontColor"]} />
          <DropArrow aria-label="字体颜色"><Triangle /></DropArrow>
          <Divider />
          <TextButton><Icon name="design" /><span>设计<Hot k="S" /></span></TextButton>
          <TextButton><Icon name="newslide" /><span>新幻灯片<Hot k="N" /></span></TextButton>
          <DropArrow $low aria-label="工具栏选项"><Triangle /></DropArrow>
        </ToolStrip>
      </ToolRow>

      <ToolRow $h={26}>
        <ToolStrip>
          <Grip />
          <Tools w={99} names={["new", "open", "save", "mail", "find"]} />
          <Divider />
          <Tools w={61} names={["print", "preview", "spell"]} />
          <Divider />
          <Tools w={82} names={["cut", "copy", "paste", "brush"]} />
          <Divider />
          <Tools w={20} names={["undo"]} />
          <DropArrow aria-label="撤消"><Triangle /></DropArrow>
          <Tools w={20} names={["redo"]} />
          <DropArrow aria-label="恢复"><Triangle color="#b5b4a7" /></DropArrow>
          <Divider />
          <Tools w={81} names={["chart", "table", "borders", "link"]} />
          <Divider />
          <Tools w={82} names={["expand", "fontAA", "grid", "color"]} />
          <Combo w={69} label="显示比例" value="55%" />
          <Divider />
          <Tools w={41} names={["help", "research"]} />
          <DropArrow $low aria-label="工具栏选项"><Triangle /></DropArrow>
        </ToolStrip>
      </ToolRow>

      <ToolRow $h={25}>
        <ToolStrip>
          <Grip />
          <TextButton $gap={2}><Icon name="ball" /><span>录制</span></TextButton>
          <Tools w={102} names={["mic", "webcam", "screencam", "props", "qball"]} on="mic" />
          <DropArrow $low aria-label="工具栏选项"><Triangle /></DropArrow>
        </ToolStrip>
      </ToolRow>

      <Body>
        <SidePane>
          <Tabs>
            <Tab $w={48}>大纲</Tab>
            <Tab $w={56} $on>幻灯片</Tab>
            <Spring />
            <PlainButton aria-label="关闭窗格"><svg width="8" height="8"><path d="M1 1l6 6M7 1L1 7" stroke="#000" strokeWidth="1.500" /></svg></PlainButton>
          </Tabs>
          <ListArea>
            <ThumbList>
              {slides.map((s) => (
                <ThumbItem key={s.n}>
                  <ThumbNumber>
                    {s.n}
                    {s.star && (
                      <svg width="12" height="12" viewBox="0 0 12 12" fill="none" stroke="#999">
                        <path d="M7 1l1 3h3L9 6l1 4-3-2-3 2 1-4-2-2h3zM0 2h3M0 5h2M0 9h3" strokeWidth=".8" />
                      </svg>
                    )}
                  </ThumbNumber>
                  <ThumbFrame $on={s.on}>
                    <Thumb slide={s} />
                  </ThumbFrame>
                </ThumbItem>
              ))}
            </ThumbList>
            <ScrollColumn>
              <ScrollButton aria-label="向上"><Triangle dir="up" /></ScrollButton>
              <ScrollSpace $part={5} />
              <ScrollThumb $h={70} />
              <ScrollSpace $part={1} />
              <ScrollButton aria-label="向下"><Triangle /></ScrollButton>
            </ScrollColumn>
          </ListArea>
          <ViewBar>
            <ViewButton $on aria-label="普通视图"><Icon name="normal" size={12} /></ViewButton>
            <ViewButton aria-label="浏览视图"><Icon name="sorter" size={12} /></ViewButton>
            <ViewButton aria-label="放映"><Icon name="show" size={12} /></ViewButton>
            <ScrollButton aria-label="向左"><Triangle dir="left" color="#aaa99a" /></ScrollButton>
            <Spring />
            <ScrollButton aria-label="向右"><Triangle dir="right" color="#aaa99a" /></ScrollButton>
          </ViewBar>
        </SidePane>
        <Splitter />
        <WorkColumn>
          <Workspace>
            <Canvas>
              <Slide>
                <SlideFrame>
                  <SlideHeader>
                    <Logo>
                      <LogoName>传智<em>播</em>客</LogoName>
                      <LogoUrl>www.itcast.cn</LogoUrl>
                    </Logo>
                    <Slogan>—高级软件人才实作培训专家！</Slogan>
                  </SlideHeader>
                  <SlideTitle>Tip<span>：</span>Tomcat<span>体系架构</span></SlideTitle>
                  <TitleRule />
                  <DiagramBox>
                    <Diagram />
                  </DiagramBox>
                </SlideFrame>
                <SlideFooter>北京传智播客教育 www.itcast.cn</SlideFooter>
              </Slide>
            </Canvas>
            <ScrollColumn>
              <ScrollButton aria-label="向上"><Triangle dir="up" /></ScrollButton>
              <ScrollSpace $part={18} />
              <ScrollThumb $h={20} />
              <ScrollSpace $part={5} />
              <ScrollButton aria-label="向下"><Triangle /></ScrollButton>
              <ScrollButton aria-label="上一张"><svg width="8" height="10"><path d="M4 0l3 4H1zM4 5l3 4H1z" /></svg></ScrollButton>
              <ScrollButton aria-label="下一张"><svg width="8" height="10"><path d="M4 5l3-4H1zM4 10l3-4H1z" /></svg></ScrollButton>
              <ScrollThumb $h={17} />
            </ScrollColumn>
          </Workspace>
          <WorkEdge />
        </WorkColumn>
      </Body>

      <ToolRow $h={27}>
        <ToolStrip>
          <Grip />
          <TextButton $gap={1} $tight><span>绘图<Hot k="R" /></span><Triangle /></TextButton>
          <ToolButton $on aria-label="选择对象"><Icon name="pointer" /></ToolButton>
          <TextButton $gap={0} $tight $wide><span>自选图形<Hot k="U" /></span><Triangle /></TextButton>
          <Tools w={204} names={["line", "arrow", "rect", "oval", "textbox", "vtextbox", "wordart", "diagram", "clipart", "picture"]} />
          <Divider />
          <Tools w={20} names={["fill"]} />
          <DropArrow aria-label="填充颜色"><Triangle /></DropArrow>
          <Tools w={20} names={["pen"]} />
          <DropArrow aria-label="线条颜色"><Triangle /></DropArrow>
          <Tools w={20} names={["fontColor"]} />
          <DropArrow aria-label="字体颜色"><Triangle /></DropArrow>
          <Tools w={101} names={["weight", "dash", "arrows", "shadow", "cube"]} />
          <DropArrow $low aria-label="工具栏选项"><Triangle /></DropArrow>
        </ToolStrip>
      </ToolRow>

      <StatusBar>
        <StatusCell $w={221}>幻灯片<Latin> 18 / 22</Latin></StatusCell>
        <StatusCell $w={220}><Latin>1_Studio</Latin></StatusCell>
        <StatusCell $w={160}>中文<Latin>(</Latin>中国<Latin>)</Latin></StatusCell>
        <StatusCell $w={32}><Icon name="spellbook" size={18} /></StatusCell>
      </StatusBar>

      <TaskBar>
        <StartButton><Icon name="windows" size={17} />开始</StartButton>
        <QuickLaunch>
          {["ie", "oe", "ultra", "photo", "msn", "plug"].map((n) => (
            <ToolButton key={n} aria-label={n}><Icon name={n} size={15} /></ToolButton>
          ))}
          <More $push={23} aria-label="更多">»</More>
        </QuickLaunch>
        <TaskButtons>
          <TaskButton $on><Icon name="ppt" /><Latin>Microsoft P...</Latin></TaskButton>
          <TaskButton><Icon name="folder" size={15} /><Latin>conf</Latin></TaskButton>
          <TaskButton><Icon name="folder" size={15} /><Latin>tomcat</Latin></TaskButton>
          <TaskButton><Icon name="ultra" /><Latin>UltraEdit-3...</Latin></TaskButton>
          <TaskButton><Icon name="ie" /><span>空白页<Latin> - Wi...</Latin></span></TaskButton>
        </TaskButtons>
        <DocBar>
          <Icon name="keyboard" />
          <span>开发文档</span>
          <More $push={0} aria-label="更多">»</More>
        </DocBar>
        <Tray>
          {["redplug", "person", "bubble", "net", "wireless", "people", "speaker", "usb", "avira"].map((n) => (
            <Icon key={n} name={n} />
          ))}
          <Clock>14:03</Clock>
        </Tray>
      </TaskBar>
    </Page>
  );
}
